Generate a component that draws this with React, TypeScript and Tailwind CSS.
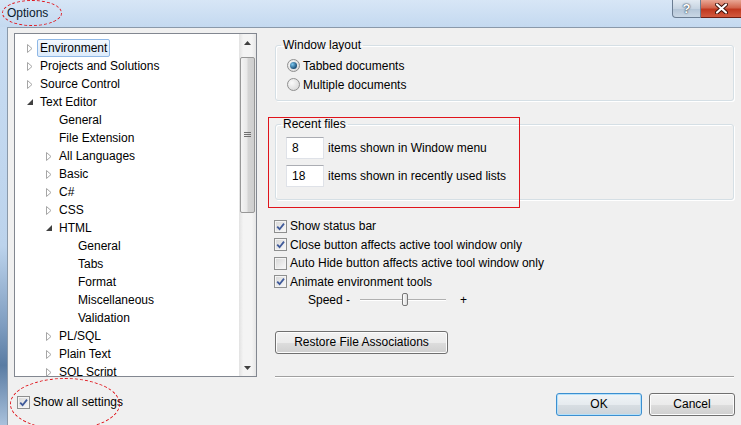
import React from 'react';

type TreeNode = { label: string; level: number; state?: 'open' | 'closed'; selected?: boolean };

const TREE: TreeNode[] = [
  { label: 'Environment', level: 0, state: 'closed', selected: true },
  { label: 'Projects and Solutions', level: 0, state: 'closed' },
  { label: 'Source Control', level: 0, state: 'closed' },
  { label: 'Text Editor', level: 0, state: 'open' },
  { label: 'General', level: 1 },
  { label: 'File Extension', level: 1 },
  { label: 'All Languages', level: 1, state: 'closed' },
  { label: 'Basic', level: 1, state: 'closed' },
  { label: 'C#', level: 1, state: 'closed' },
  { label: 'CSS', level: 1, state: 'closed' },
  { label: 'HTML', level: 1, state: 'open' },
  { label: 'General', level: 2 },
  { label: 'Tabs', level: 2 },
  { label: 'Format', level: 2 },
  { label: 'Miscellaneous', level: 2 },
  { label: 'Validation', level: 2 },
  { label: 'PL/SQL', level: 1, state: 'closed' },
  { label: 'Plain Text', level: 1, state: 'closed' },
  { label: 'SQL Script', level: 1, state: 'closed' },
];

const INDENT = ['pl-[9px]', 'pl-[28px]', 'pl-[47px]'];

const OPTIONS = [
  { label: 'Show status bar', checked: true },
  { label: 'Close button affects active tool window only', checked: true },
  { label: 'Auto Hide button affects active tool window only', checked: false },
  { label: 'Animate environment tools', checked: true },
];

function Expander({ state }: { state?: 'open' | 'closed' }) {
  if (state === 'closed') {
    return (
      <svg width="6" height="9" viewBox="0 0 6 9">
        <path d="M0.5 0.5 L5 4.5 L0.5 8.5 Z" fill="#fff" stroke="#a6a6a6" />
      </svg>
    );
  }
  if (state === 'open') {
    return (
      <svg width="6" height="6" viewBox="0 0 6 6">
        <path d="M6 0 L6 6 L0 6 Z" fill="#404040" />
      </svg>
    );
  }
  return null;
}

function Checkbox({ checked }: { checked: boolean }) {
  return (
    <span className="flex h-[13px] w-[13px] shrink-0 items-center justify-center border border-[#8e8f8f] bg-[linear-gradient(135deg,#d6d6d6,#fafafa)] shadow-[inset_0_0_0_1px_#f4f4f4]">
      {checked && (
        <svg width="9" height="9" viewBox="0 0 9 9">
          <path d="M1.2 4.6 L3.6 7.2 L8 1.6" fill="none" stroke="#3f5a9a" strokeWidth="1.8" />
        </svg>
      )}
    </span>
  );
}

function Radio({ checked }: { checked: boolean }) {
  return (
    <span className="flex h-[13px] w-[13px] shrink-0 items-center justify-center rounded-full border border-[#8f8f8f] bg-[radial-gradient(circle_at_35%_35%,#fafafa,#d2d2d2)]">
      {checked && (
        <span className="h-[7px] w-[7px] rounded-full bg-[radial-gradient(circle_at_35%_35%,#7cc7ef,#1b4f78_70%)]" />
      )}
    </span>
  );
}

function Button({ label, focused, className }: { label: string; focused?: boolean; className: string }) {
  return (
    <div
      className={`flex items-center justify-center rounded-[3px] border ${
        focused
          ? 'border-[#3c8fd0] shadow-[inset_0_0_0_1px_#b4e0fa] bg-[linear-gradient(to_bottom,#f0f4f7_0%,#e6ebef_50%,#d8dee3_51%,#ccd3d9_100%)]'
          : 'border-[#707070] shadow-[inset_0_0_0_1px_#fcfcfc] bg-[linear-gradient(to_bottom,#f2f2f2_0%,#ebebeb_50%,#dddddd_51%,#cfcfcf_100%)]'
      } ${className}`}
    >
      {label}
    </div>
  );
}

function TextBox({ value }: { value: string }) {
  return (
    <div className="flex h-[22px] w-[38px] items-center border border-[#dfe2e8] border-t-[#abadb3] bg-white pl-[5px]">
      {value}
    </div>
  );
}

function ScrollBar() {
  return (
    <div className="flex w-[17px] flex-col bg-[linear-gradient(to_right,#e2e2e2,#f4f4f4_25%,#f4f4f4_75%,#e6e6e6)]">
      <div className="flex h-[17px] items-center justify-center">
        <svg width="7" height="4" viewBox="0 0 7 4">
          <path d="M3.5 0 L7 4 L0 4 Z" fill="#404040" />
        </svg>
      </div>
      <div className="mx-[1px] mt-[6px] flex h-[156px] items-center justify-center rounded-[2px] border border-[#979797] bg-[linear-gradient(to_right,#f4f4f4,#e8e8e8_45%,#d4d4d4_55%,#cfcfcf)]">
        <svg width="7" height="6" viewBox="0 0 7 6">
          <path d="M0 0.5 H7 M0 2.5 H7 M0 4.5 H7" stroke="#707070" strokeWidth="1" />
        </svg>
      </div>
      <div className="flex-1" />
      <div className="flex h-[17px] items-center justify-center">
        <svg width="7" height="4" viewBox="0 0 7 4">
          <path d="M0 0 L7 0 L3.5 4 Z" fill="#404040" />
        </svg>
      </div>
    </div>
  );
}

function TreeView() {
  return (
    <div className="flex h-[344px] w-[243px] border border-[#828790] bg-white">
      <div className="flex-1 overflow-hidden pt-[5px]">
        {TREE.map((node, i) => (
          <div key={i} className={`flex h-[18px] items-center ${INDENT[node.level]}`}>
            <span className="flex w-[13px] items-center pl-[3px]">
              <Expander state={node.state} />
            </span>
            <span
              className={`whitespace-nowrap rounded-[2px] border px-[2px] leading-[16px] ${
                node.selected
                  ? 'border-[#8fb8e6] bg-[linear-gradient(to_bottom,#f3f8fd,#dcebfb)]'
                  : 'border-transparent'
              }`}
            >
              {node.label}
            </span>
          </div>
        ))}
      </div>
      <ScrollBar />
    </div>
  );
}

function GroupBox({ title, children, className }: { title: string; children: React.ReactNode; className: string }) {
  return (
    <fieldset
      className={`w-[459px] rounded-[3px] border border-[#d5dfe5] p-0 shadow-[inset_1px_1px_0_#fff,1px_1px_0_#fff] ${className}`}
    >
      <legend className="ml-[5px] px-[2px] leading-[16px]">{title}</legend>
      {children}
    </fieldset>
  );
}

export default function App() {
  return (
    <div className="relative h-[425px] w-[741px] overflow-hidden bg-[#f0f0f0] font-['Liberation_Sans',Arial,sans-serif] text-[12px] text-black">
      {/* title bar */}
      <div className="flex h-[27px] items-start bg-[linear-gradient(to_bottom,#d7e6f6,#c4d9f0)]">
        <span className="pl-[7px] pt-[6px] leading-[14px] text-[#0b1a2c]">Options</span>
        <div className="ml-auto flex">
          <div className="flex h-[18px] w-[29px] items-center justify-center rounded-bl-[4px] border border-t-0 border-[#6b7d92] bg-[linear-gradient(to_bottom,#e2eaf2,#c7d4e2_50%,#b3c4d6_51%,#c9d7e5)] text-[13px] font-bold text-white [text-shadow:0_0_2px_#2a3948,0_0_1px_#2a3948]">
            ?
          </div>
          <div className="flex h-[18px] w-[40px] items-center justify-center border-b border-[#6e1d12] bg-[linear-gradient(to_bottom,#e9a795,#d2654d_45%,#c0381f_55%,#d25a3f)]">
            <svg width="13" height="11" viewBox="0 0 13 11">
              <path d="M2 1.5 L11 9.5 M11 1.5 L2 9.5" stroke="#3b1009" strokeWidth="4" strokeLinecap="round" />
              <path d="M2 1.5 L11 9.5 M11 1.5 L2 9.5" stroke="#fff" strokeWidth="2.2" strokeLinecap="round" />
            </svg>
          </div>
        </div>
      </div>

      <div className="flex h-[398px]">
        {/* window frame */}
        <div className="w-[7px] bg-[linear-gradient(to_bottom,#c8dcf2_0%,#bcd3ec_55%,#7f9dc0_75%,#5a7ca3_85%,#a9c1dc_100%)]" />

        <div className="flex flex-1 border-l border-t border-[#8a99aa]">
          {/* left column */}
          <div className="flex w-[249px] flex-col pl-[6px] pt-[5px]">
            <TreeView />
            <div className="ml-[3px] mt-[16px] flex h-[18px] items-center gap-[3px]">
              <Checkbox checked />
              <span>Show all settings</span>
            </div>
          </div>

          {/* right column */}
          <div className="ml-[18px] flex flex-1 flex-col">
            <GroupBox title="Window layout" className="mt-[9px]">
              <div className="pb-[6px] pl-[11px] pt-[3px]">
                <div className="flex h-[19px] items-center gap-[3px]">
                  <Radio checked />
                  <span>Tabbed documents</span>
                </div>
                <div className="flex h-[19px] items-center gap-[3px]">
                  <Radio checked={false} />
                  <span>Multiple documents</span>
                </div>
              </div>
            </GroupBox>

            <GroupBox title="Recent files" className="mt-[15px]">
              <div className="flex flex-col gap-[6px] pb-[12px] pl-[10px] pt-[5px]">
                <div className="flex items-center gap-[4px]">
                  <TextBox value="8" />
                  <span>items shown in Window menu</span>
                </div>
                <div className="flex items-center gap-[4px]">
                  <TextBox value="18" />
                  <span>items shown in recently used lists</span>
                </div>
              </div>
            </GroupBox>

            <div className="ml-[-1px] mt-[17px] flex flex-col">
              {OPTIONS.map((o) => (
                <div key={o.label} className="flex h-[18.5px] items-center gap-[3px]">
                  <Checkbox checked={o.checked} />
                  <span>{o.label}</span>
                </div>
              ))}
              <div className="flex h-[18.5px] items-center pl-[34px]">
                <span>Speed -</span>
                <div className="relative ml-[10px] h-[2px] w-[86px] border-t border-[#b0b0b0] bg-white">
                  <div className="absolute left-[42px] top-[-7px] h-[13px] w-[6px] rounded-[2px] border border-[#787878] bg-[linear-gradient(to_right,#fdfdfd,#dcdcdc)]" />
                </div>
                <span className="ml-[14px]">+</span>
              </div>
            </div>

            <Button label="Restore File Associations" className="mt-[21px] h-[23px] w-[173px]" />

            <div className="mt-[22px] h-[2px] w-[459px] border-t border-[#a0a0a0] bg-white" />

            <div className="mt-[15px] flex justify-end gap-[7px] pr-[6px]">
              <Button label="OK" focused className="h-[23px] w-[86px]" />
              <Button label="Cancel" className="h-[23px] w-[86px]" />
            </div>
          </div>
        </div>
      </div>

      {/* annotations */}
      <div className="absolute left-[2px] top-0 h-[26px] w-[60px] rounded-[50%] border border-dashed border-[#e0141b]" />
      <div className="absolute left-[268px] top-[117px] h-[91px] w-[252px] border border-[#e0141b]" />
      <div className="absolute left-[10px] top-[378px] h-[52px] w-[110px] rounded-[50%] border border-dashed border-[#e0141b]" />
    </div>
  );
}
